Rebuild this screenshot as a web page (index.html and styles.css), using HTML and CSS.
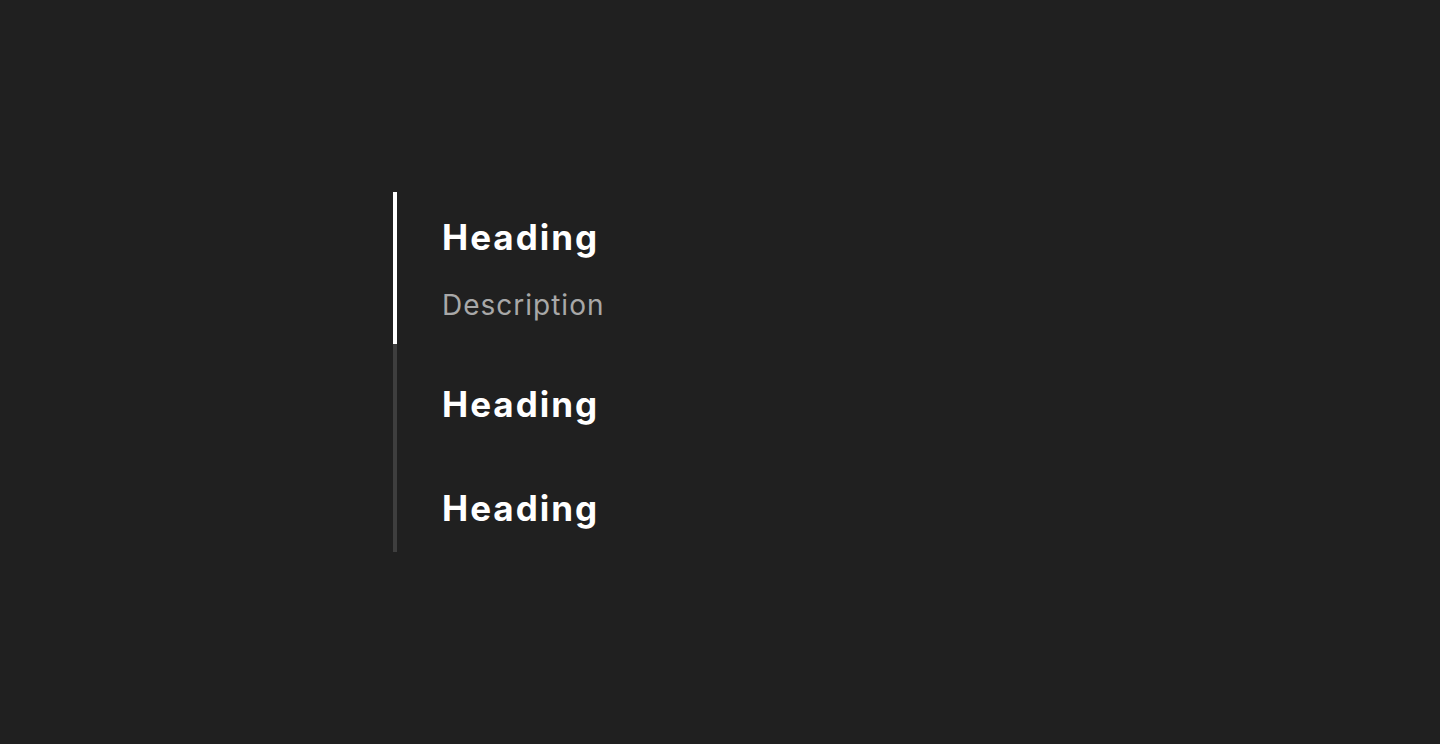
FILE: index.html
```html
<!doctype html>
<html lang="en">
<head>
	<meta charset="UTF-8">
	<title>Steps</title>
	<link rel="stylesheet" href="styles.css">
</head>
<body>
	<ul class="steps">
		<li class="step step_active">
			<div class="step_title">Heading</div>
			<div class="step_desc">Description</div>
		</li>
		<li class="step">
			<div class="step_title">Heading</div>
		</li>
		<li class="step">
			<div class="step_title">Heading</div>
		</li>
	</ul>
</body>
</html>
```

FILE: styles.css
```css
html, body, ul, li{
	margin: 0;
	padding: 0;
}
body{
	background-color: #202020;
	font-family: Inter, 'Liberation Sans', sans-serif;
	height: 744px;
}
ul{
	list-style: none;
}
.steps{
	width: 400px;
	margin-left: 393px;
	padding-top: 192px;
}
.step{
	border-left: 4px solid #3e3e3e;
	padding: 38px 0 22px 45px;
}
.step_active{
	border-left-color: #fff;
	padding: 23px 0 19px 45px;
}
.step_title{
	color: #fff;
	font-size: 35px;
	line-height: 44px;
	font-weight: bold;
	letter-spacing: 2px;
}
.step_desc{
	margin-top: 26px;
	color: #a8a8a8;
	font-size: 28px;
	line-height: 40px;
	letter-spacing: 1px;
}
```
